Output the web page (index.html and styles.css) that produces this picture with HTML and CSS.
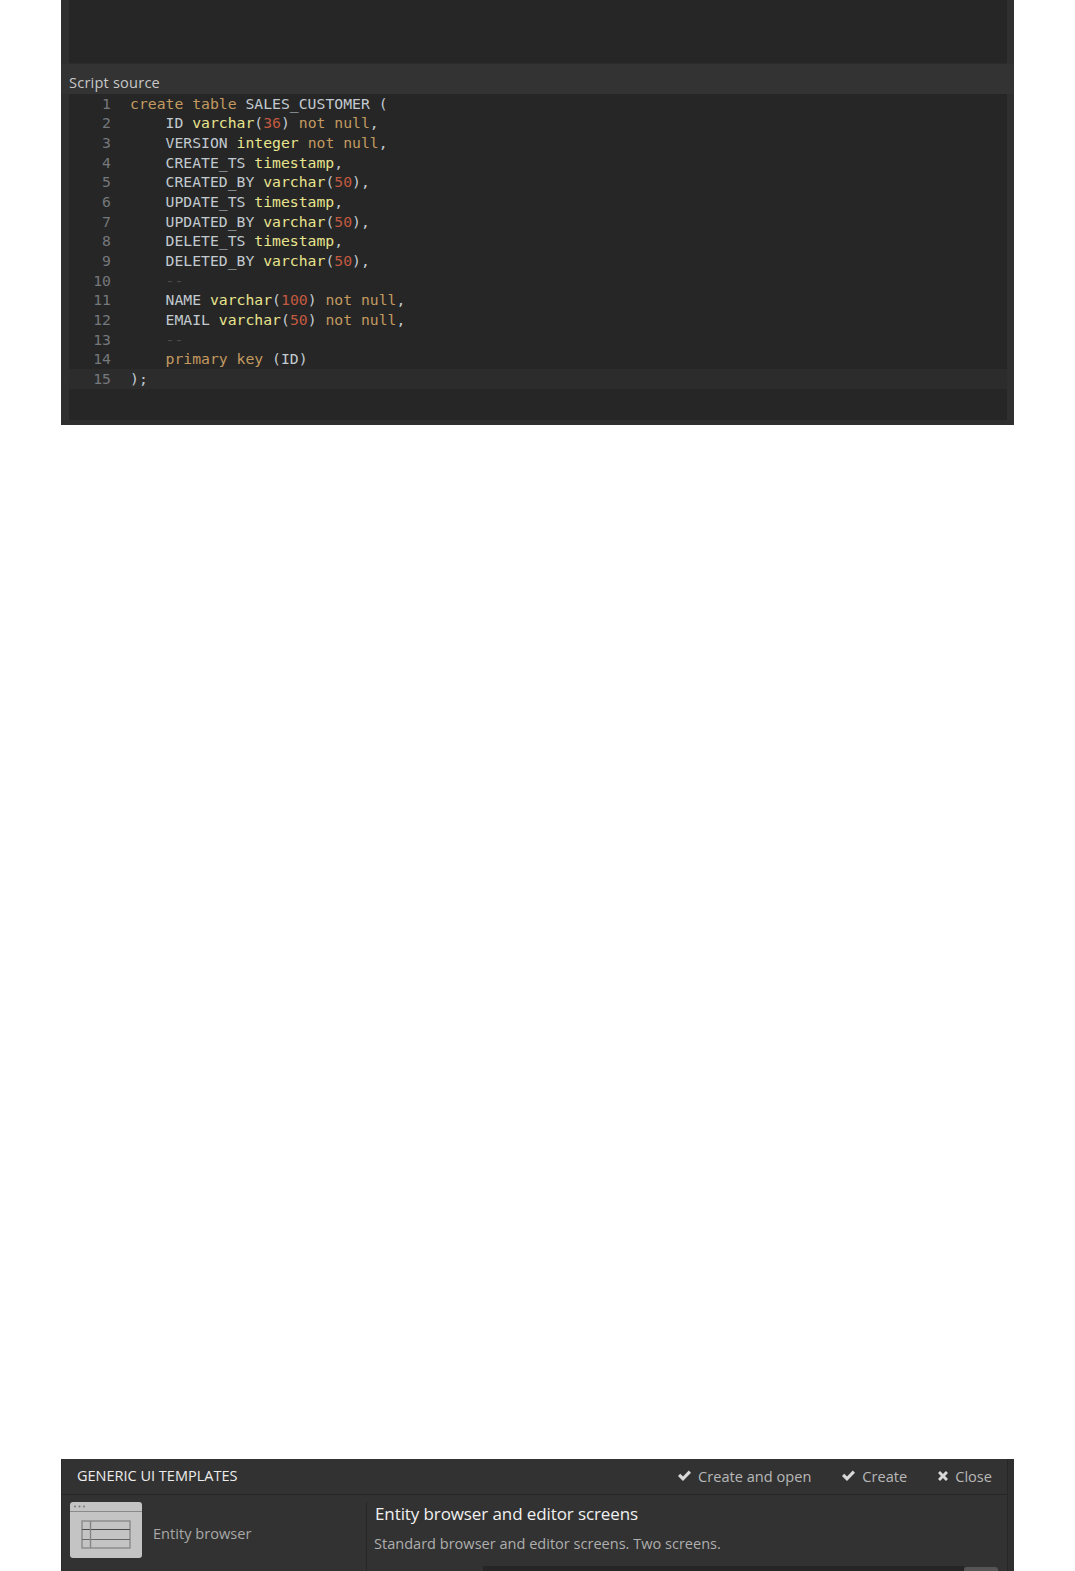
FILE: index.html
```html
<!DOCTYPE html>
<html lang="en">
<head>
<meta charset="utf-8">
<title>Script source and Generic UI templates</title>
<link rel="stylesheet" href="styles.css">
</head>
<body>
<section class="panel script-panel">
  <div class="editor-empty"></div>
  <div class="section-label">Script source</div>
  <div class="code">
    <div class="line"><span class="num">1</span><span class="src"><span class="kw">create table</span> SALES_CUSTOMER (</span></div>
    <div class="line"><span class="num">2</span><span class="src">    ID <span class="ty">varchar</span>(<span class="n">36</span>) <span class="kw">not null</span>,</span></div>
    <div class="line"><span class="num">3</span><span class="src">    VERSION <span class="ty">integer</span> <span class="kw">not null</span>,</span></div>
    <div class="line"><span class="num">4</span><span class="src">    CREATE_TS <span class="ty">timestamp</span>,</span></div>
    <div class="line"><span class="num">5</span><span class="src">    CREATED_BY <span class="ty">varchar</span>(<span class="n">50</span>),</span></div>
    <div class="line"><span class="num">6</span><span class="src">    UPDATE_TS <span class="ty">timestamp</span>,</span></div>
    <div class="line"><span class="num">7</span><span class="src">    UPDATED_BY <span class="ty">varchar</span>(<span class="n">50</span>),</span></div>
    <div class="line"><span class="num">8</span><span class="src">    DELETE_TS <span class="ty">timestamp</span>,</span></div>
    <div class="line"><span class="num">9</span><span class="src">    DELETED_BY <span class="ty">varchar</span>(<span class="n">50</span>),</span></div>
    <div class="line"><span class="num">10</span><span class="src">    <span class="cm">--</span></span></div>
    <div class="line"><span class="num">11</span><span class="src">    NAME <span class="ty">varchar</span>(<span class="n">100</span>) <span class="kw">not null</span>,</span></div>
    <div class="line"><span class="num">12</span><span class="src">    EMAIL <span class="ty">varchar</span>(<span class="n">50</span>) <span class="kw">not null</span>,</span></div>
    <div class="line"><span class="num">13</span><span class="src">    <span class="cm">--</span></span></div>
    <div class="line"><span class="num">14</span><span class="src">    <span class="kw">primary key</span> (ID)</span></div>
    <div class="line active"><span class="num">15</span><span class="src">);</span></div>
  </div>
</section>
<section class="panel templates-panel">
  <div class="tpl-main">
    <header class="tpl-header">
      <h2 class="tpl-title">GENERIC UI TEMPLATES</h2>
      <div class="tpl-actions">
        <span class="action"><svg class="ico" viewBox="0 0 16 14"><path d="M1 7.5 3.4 5l3 3L12.6 1.6 15 4 6.4 12.8z"/></svg>Create and open</span>
        <span class="action"><svg class="ico" viewBox="0 0 16 14"><path d="M1 7.5 3.4 5l3 3L12.6 1.6 15 4 6.4 12.8z"/></svg>Create</span>
        <span class="action"><svg class="ico ico-x" viewBox="0 0 14 14"><path d="M3.6 1.2 7 4.6l3.4-3.4 2.4 2.4L9.4 7l3.4 3.4-2.4 2.4L7 9.4l-3.4 3.4-2.4-2.4L4.6 7 1.2 3.6z"/></svg>Close</span>
      </div>
    </header>
    <div class="tpl-body">
      <div class="tpl-list">
        <div class="tpl-item">
          <svg class="thumb" viewBox="0 0 72 56">
            <rect x="0" y="0" width="72" height="56" rx="3" fill="#c4c4c4"/>
            <rect x="0" y="9" width="72" height="1" fill="#8a8a8a"/>
            <circle cx="5" cy="4.5" r="1" fill="#777"/><circle cx="9.5" cy="4.5" r="1" fill="#777"/><circle cx="14" cy="4.5" r="1" fill="#777"/>
            <rect x="12" y="19" width="48" height="27" fill="none" stroke="#8a8a8a" stroke-width="1.4"/>
            <path d="M12 27.5h48" stroke="#4a4a4a" fill="none" stroke-width="1.2"/>
            <path d="M12 37.5h48" stroke="#666" fill="none" stroke-width="1.2"/>
            <path d="M20.5 19v27" stroke="#858585" fill="none" stroke-width="1.4"/>
          </svg>
          <span class="tpl-name">Entity browser</span>
        </div>
      </div>
      <div class="tpl-detail">
        <h3 class="detail-title">Entity browser and editor screens</h3>
        <p class="detail-text">Standard browser and editor screens. Two screens.</p>
        <div class="field-row"><span class="field-input"></span><span class="field-btn"></span></div>
      </div>
    </div>
  </div>
</section>
</body>
</html>
```
FILE: styles.css
```css
html, body { margin: 0; padding: 0; background: #fff; }
body { height: 1571px; overflow: hidden; position: relative; font-family: "Open Sans", "Noto Sans", sans-serif; }
.panel { width: 953px; margin-left: 61px; background: #2f2f2f; box-sizing: border-box; }
.script-panel { height: 425px; overflow: hidden; }
.editor-empty { height: 64px; margin: 0 7px 0 8px; background: #262626; box-sizing: border-box; border-bottom: 1px solid #2b2b2b; }
.section-label { height: 29.75px; padding-left: 8px; background: #333; line-height: 37px; font-size: 14.6px; color: #c8c8c8; letter-spacing: 0.2px; }
.code { height: 326.25px; margin: 0 7px 0 8px; background: #262626; font-family: "DejaVu Sans Mono", monospace; font-size: 14.75px; }
.line { display: flex; height: 19.67px; line-height: 19.67px; white-space: pre; color: #c2cad0; }
.line.active { background: #2c2c2c; }
.num { width: 42px; text-align: right; color: #75787c; flex: none; }
.src { margin-left: 19px; }
.kw { color: #c39a60; }
.ty { color: #e8e48e; }
.n { color: #c25a40; }
.cm { color: #4c4c4c; }
.templates-panel { position: absolute; left: 0; top: 1459px; height: 112px; overflow: hidden; border-left: 1px solid #2a2a2a; }
.tpl-main { width: 945px; height: 112px; background: #323232; border-right: 1px solid #272727; box-sizing: content-box; }
.tpl-header { height: 35px; box-sizing: content-box; display: flex; align-items: center; justify-content: space-between; padding: 0 15px 0 15px; border-bottom: 1px solid #262626; }
.tpl-title { margin: 0 0 2px; font-size: 14.5px; font-weight: 400; color: #ececec; }
.tpl-actions { display: flex; gap: 30px; margin-bottom: 2px; }
.action { display: flex; align-items: center; gap: 6px; font-size: 14.6px; color: #b8b8b8; }
.ico { width: 15px; height: 13px; fill: #d8d8d8; }
.ico-x { width: 12px; height: 12px; }
.tpl-body { display: flex; }
.tpl-list { width: 304px; flex: none; padding: 7px 0 0 8px; box-sizing: border-box; }
.tpl-item { display: flex; align-items: center; gap: 11px; }
.thumb { width: 72px; height: 56px; flex: none; }
.tpl-name { font-size: 14.6px; color: #a8a8a8; padding-top: 6px; }
.tpl-detail { flex: 1; min-width: 0; margin-top: 7px; border-left: 1px solid #262626; padding-left: 8px; height: 76px; padding-right: 9px; }
.detail-title { margin: 0; font-size: 17px; font-weight: 400; color: #f0f0f0; letter-spacing: -0.1px; line-height: 24px; }
.detail-text { margin: 7px 0 0 -1px; font-size: 14.56px; color: #aeaeae; line-height: 20px; }
.field-row { display: flex; margin: 13px 0 0 108px; height: 20px; }
.field-input { flex: 1; background: #262626; }
.field-btn { width: 34px; margin-top: 1px; background: #555; border-radius: 3px 3px 0 0; }
```
